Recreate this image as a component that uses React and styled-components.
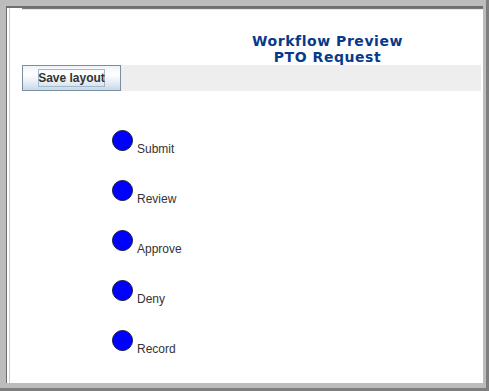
import React from "react";
import styled, { createGlobalStyle } from "styled-components";

const GlobalStyle = createGlobalStyle`
  html, body {
    margin: 0;
    padding: 0;
    width: 489px;
    height: 391px;
    overflow: hidden;
    background: #bcbcbc;
  }
  * {
    box-sizing: border-box;
  }
`;

const Frame = styled.div`
  width: 489px;
  height: 391px;
  background: #bcbcbc;
  border-right: 3px solid #7e7e7e;
  border-bottom: 3px solid #7e7e7e;
  padding: 6px 3px 5px 6px;
  display: flex;
`;

const Window = styled.div`
  flex: 1;
  display: flex;
  background: #ffffff;
  border-left: 1px solid #6e6e6e;
  border-top: 2px solid #6e6e6e;
`;

const Inset = styled.div`
  flex: 1;
  display: flex;
  margin-left: 2px;
  border-left: 1px solid #c4d2e8;
`;

const Panel = styled.div`
  flex: 1;
  display: flex;
  flex-direction: column;
  margin-left: 12px;
  border-top: 1px solid #7a7a7a;
  box-shadow: inset 0 1px 0 #dfe7f3;
`;

const Header = styled.div`
  height: 56px;
  padding: 24px 0 0 150px;
  text-align: center;
  font-family: "DejaVu Sans", Verdana, sans-serif;
  font-weight: bold;
  font-size: 14px;
  letter-spacing: 0.55px;
  line-height: 16px;
  color: #073a88;
  white-space: nowrap;
`;

const Toolbar = styled.div`
  height: 26px;
  margin-right: 2px;
  background: #eeeeee;
  display: flex;
`;

const Button = styled.button`
  width: 99px;
  height: 26px;
  padding: 0;
  border: 1px solid #7a8ea3;
  background: linear-gradient(#eef3f9, #ffffff 35%, #e4ecf4 70%, #c9d8e7);
  display: flex;
  align-items: center;
  justify-content: center;
  cursor: pointer;
`;

const Focus = styled.span`
  width: 67px;
  height: 18px;
  border: 1px solid #a3b8cc;
  display: flex;
  align-items: center;
  justify-content: center;
  font-family: "Liberation Sans", Arial, sans-serif;
  font-weight: bold;
  font-size: 12px;
  color: #333333;
  white-space: nowrap;
`;

const Canvas = styled.div`
  flex: 1;
  display: flex;
  flex-direction: column;
  padding: 39px 0 0 90px;
`;

const Node = styled.div`
  height: 50px;
  display: flex;
  align-items: flex-start;
`;

const Dot = styled.div`
  width: 21px;
  height: 21px;
  border-radius: 50%;
  background: #0000ff;
  border: 1px solid #14143a;
`;

const Label = styled.span`
  margin: 12px 0 0 4px;
  font-family: "Liberation Sans", Arial, sans-serif;
  font-size: 12px;
  line-height: 14px;
  color: #333333;
`;

const steps = ["Submit", "Review", "Approve", "Deny", "Record"];

export default function App() {
  return (
    <>
      <GlobalStyle />
      <Frame>
        <Window>
          <Inset>
            <Panel>
              <Header>
                Workflow Preview
                <br />
                PTO Request
              </Header>
              <Toolbar>
                <Button>
                  <Focus>Save layout</Focus>
                </Button>
              </Toolbar>
              <Canvas>
                {steps.map((s) => (
                  <Node key={s}>
                    <Dot />
                    <Label>{s}</Label>
                  </Node>
                ))}
              </Canvas>
            </Panel>
          </Inset>
        </Window>
      </Frame>
    </>
  );
}
